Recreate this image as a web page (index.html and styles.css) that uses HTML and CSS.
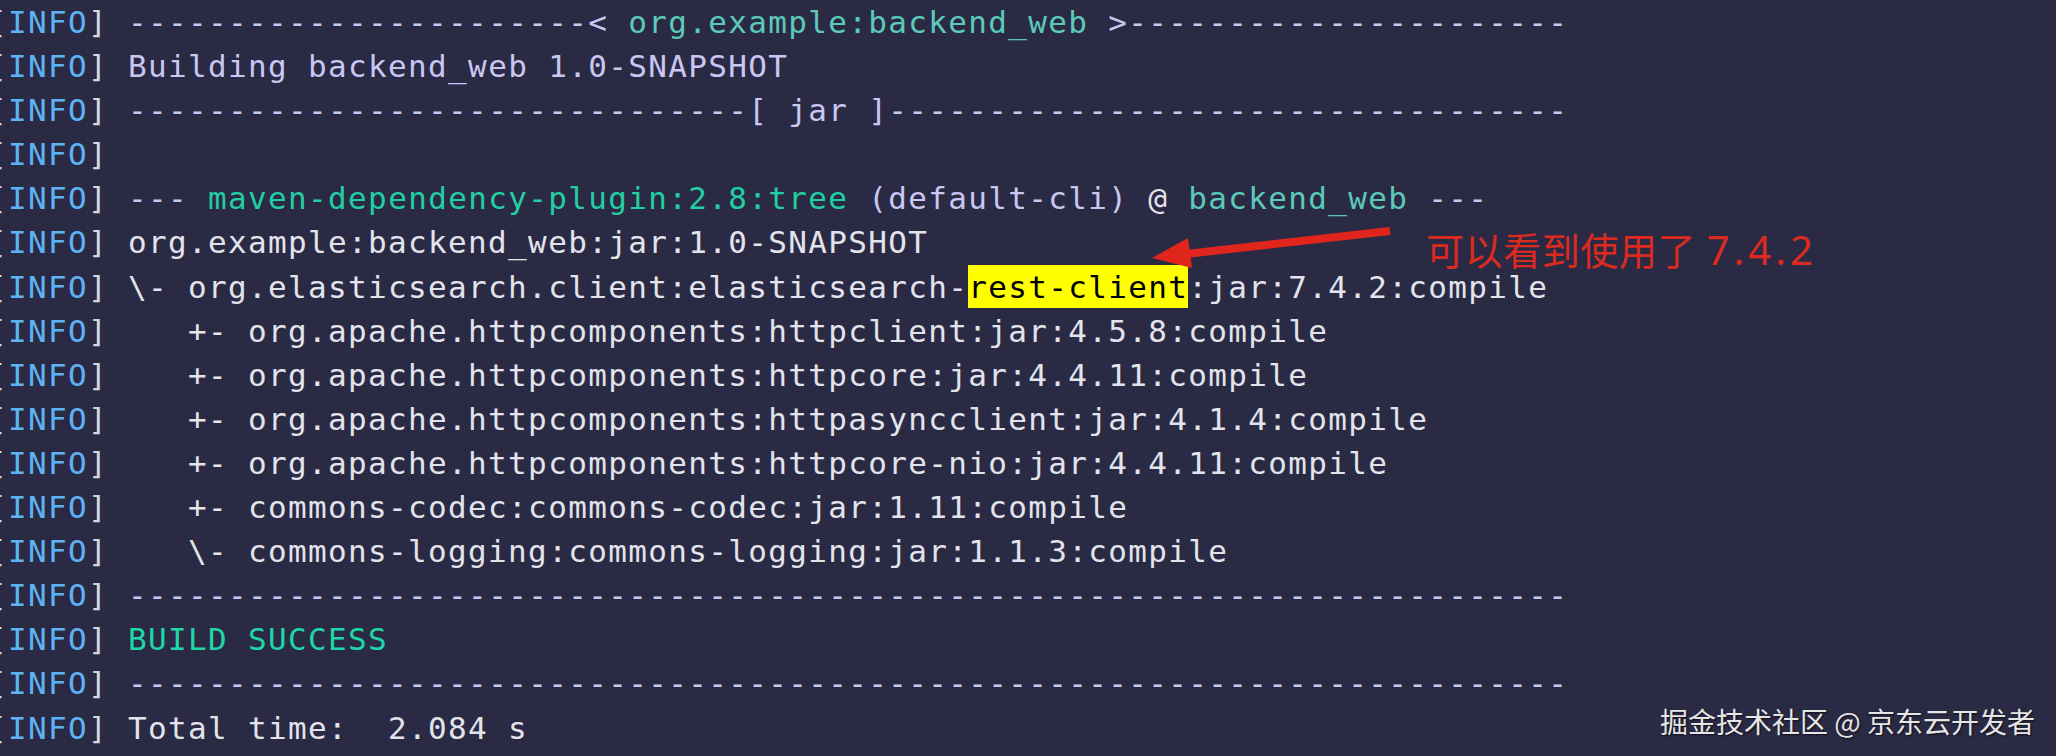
FILE: index.html
```html
<!DOCTYPE html>
<html lang="zh">
<head>
<meta charset="utf-8">
<title>mvn dependency:tree</title>
<link rel="stylesheet" href="styles.css">
</head>
<body>
<div class="screen">
  <div class="term">
    <div class="line"><span class="tag">[<span class="info">INFO</span>]</span> <span class="b">-----------------------</span><span class="b">&lt; </span><span class="cy">org.example:backend_web</span><span class="b"> &gt;----------------------</span></div>
    <div class="line"><span class="tag">[<span class="info">INFO</span>]</span> <span class="b">Building backend_web 1.0-SNAPSHOT</span></div>
    <div class="line"><span class="tag">[<span class="info">INFO</span>]</span> <span class="b">-------------------------------[ jar ]----------------------------------</span></div>
    <div class="line"><span class="tag">[<span class="info">INFO</span>]</span></div>
    <div class="line"><span class="tag">[<span class="info">INFO</span>]</span> <span class="b">---</span> <span class="gr">maven-dependency-plugin:2.8:tree</span> <span class="b">(default-cli)</span> @ <span class="cy">backend_web</span> <span class="b">---</span></div>
    <div class="line"><span class="tag">[<span class="info">INFO</span>]</span> org.example:backend_web:jar:1.0-SNAPSHOT</div>
    <div class="line"><span class="tag">[<span class="info">INFO</span>]</span> \- org.elasticsearch.client:elasticsearch-<span class="hl">rest-client</span>:jar:7.4.2:compile</div>
    <div class="line"><span class="tag">[<span class="info">INFO</span>]</span>    +- org.apache.httpcomponents:httpclient:jar:4.5.8:compile</div>
    <div class="line"><span class="tag">[<span class="info">INFO</span>]</span>    +- org.apache.httpcomponents:httpcore:jar:4.4.11:compile</div>
    <div class="line"><span class="tag">[<span class="info">INFO</span>]</span>    +- org.apache.httpcomponents:httpasyncclient:jar:4.1.4:compile</div>
    <div class="line"><span class="tag">[<span class="info">INFO</span>]</span>    +- org.apache.httpcomponents:httpcore-nio:jar:4.4.11:compile</div>
    <div class="line"><span class="tag">[<span class="info">INFO</span>]</span>    +- commons-codec:commons-codec:jar:1.11:compile</div>
    <div class="line"><span class="tag">[<span class="info">INFO</span>]</span>    \- commons-logging:commons-logging:jar:1.1.3:compile</div>
    <div class="line"><span class="tag">[<span class="info">INFO</span>]</span> <span class="b">------------------------------------------------------------------------</span></div>
    <div class="line"><span class="tag">[<span class="info">INFO</span>]</span> <span class="ok">BUILD SUCCESS</span></div>
    <div class="line"><span class="tag">[<span class="info">INFO</span>]</span> <span class="b">------------------------------------------------------------------------</span></div>
    <div class="line"><span class="tag">[<span class="info">INFO</span>]</span> Total time:  2.084 s</div>
  </div>

  <svg class="arrow" width="270" height="50" viewBox="0 0 270 50" aria-hidden="true">
    <line x1="240" y1="9" x2="36" y2="32" stroke="#e0261c" stroke-width="8" stroke-linecap="butt"/>
    <polygon points="2,36 38,16 42,46" fill="#e0261c"/>
  </svg>
  <div class="note">可以看到使用了 <span class="ver">7.4.2</span></div>

  <div class="mark">掘金技术社区 @ 京东云开发者</div>
</div>
</body>
</html>
```

FILE: styles.css
```css
html, body {
  margin: 0;
  padding: 0;
  background: #2a2a45;
}

.screen {
  position: relative;
  width: 2056px;
  height: 756px;
  overflow: hidden;
  background: #2a2a45;
}

.term {
  margin-left: -12px;
  font-family: "DejaVu Sans Mono", "Liberation Mono", monospace;
  font-size: 31px;
  letter-spacing: 1.34px;
  line-height: 44.1px;
  color: #e3e3ec;
}

.line {
  height: 44.1px;
  white-space: pre;
}

.tag { color: #d6d6e2; }
.info { color: #5db3f3; }
.b { color: #c9c7f1; }
.cy { color: #5ccab8; }
.gr { color: #22cfa2; }
.ok { color: #1fd6a6; }

.hl {
  display: inline-block;
  background: #ffff00;
  color: #000000;
  height: 43px;
  vertical-align: top;
}

.arrow {
  position: absolute;
  left: 1150px;
  top: 222px;
}

.note {
  position: absolute;
  left: 1426px;
  top: 226px;
  font-family: "Noto Sans", "Noto Sans CJK SC", sans-serif;
  font-size: 38px;
  letter-spacing: 0.6px;
  line-height: 48px;
  color: #dc2a1e;
  white-space: nowrap;
}

.ver {
  font-size: 40px;
  letter-spacing: 4px;
}

.mark {
  position: absolute;
  right: 21px;
  top: 701px;
  font-family: "Noto Sans CJK SC", "Noto Sans", sans-serif;
  font-size: 28px;
  line-height: 40px;
  color: #e6e6e6;
  text-shadow: 1px 1px 2px rgba(0, 0, 0, 0.7);
  white-space: nowrap;
}
```
